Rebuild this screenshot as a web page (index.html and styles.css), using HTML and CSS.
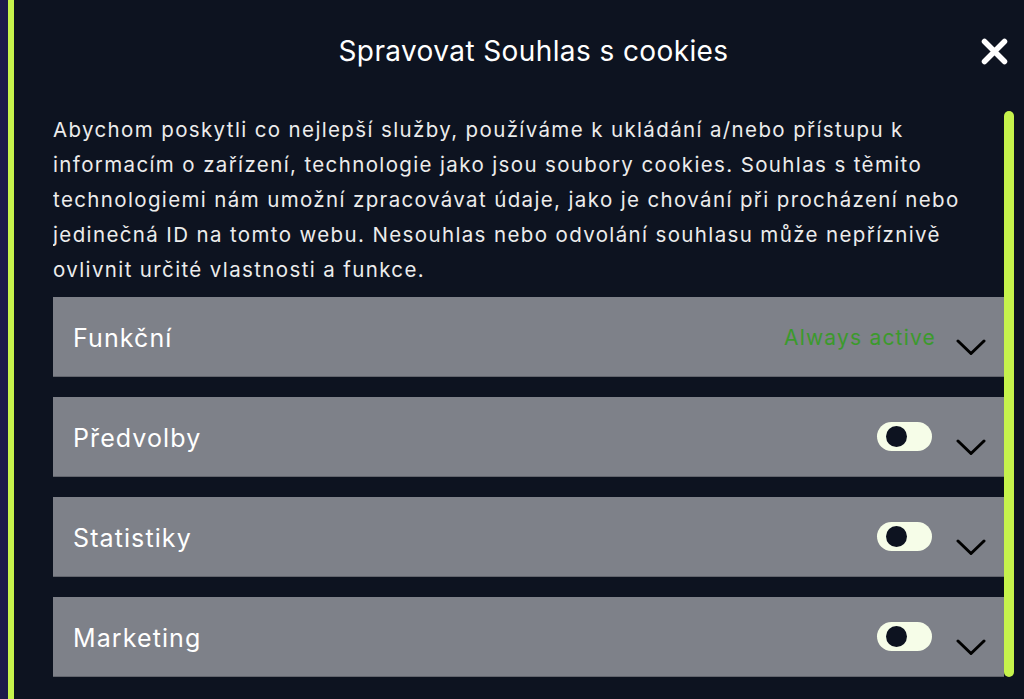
FILE: index.html
```html
<!DOCTYPE html>
<html lang="cs">
<head>
<meta charset="utf-8">
<title>Spravovat Souhlas s cookies</title>
<link rel="stylesheet" href="styles.css">
</head>
<body>
<div class="frame">
  <div class="edge"></div>
  <div class="accent"></div>
  <div class="dialog">
    <div class="header">
      <span></span>
      <h2 class="title">Spravovat Souhlas s cookies</h2>
      <button class="close" aria-label="Zavřít">
        <svg width="27" height="27" viewBox="0 0 27 27"><path d="M3.5 3.5 L23.5 23.5 M23.5 3.5 L3.5 23.5" stroke="#fff" stroke-width="5.5" stroke-linecap="round" fill="none"/></svg>
      </button>
    </div>
    <div class="main">
      <div class="scroll">
        <p class="intro">Abychom poskytli co nejlepší služby, používáme k ukládání a/nebo přístupu k informacím o zařízení, technologie jako jsou soubory cookies. Souhlas s těmito technologiemi nám umožní zpracovávat údaje, jako je chování při procházení nebo jedinečná ID na tomto webu. Nesouhlas nebo odvolání souhlasu může nepříznivě ovlivnit určité vlastnosti a funkce.</p>

        <div class="category">
          <span class="cat-title">Funkční</span>
          <span class="always">Always active</span>
          <svg class="chevron" width="30" height="17" viewBox="0 0 30 17"><path d="M2 2 L15 14.5 L28 2" stroke="#000" stroke-width="3" stroke-linecap="round" stroke-linejoin="round" fill="none"/></svg>
        </div>
        <div class="category">
          <span class="cat-title">Předvolby</span>
          <span class="toggle"><span class="knob"></span></span>
          <svg class="chevron" width="30" height="17" viewBox="0 0 30 17"><path d="M2 2 L15 14.5 L28 2" stroke="#000" stroke-width="3" stroke-linecap="round" stroke-linejoin="round" fill="none"/></svg>
        </div>
        <div class="category">
          <span class="cat-title">Statistiky</span>
          <span class="toggle"><span class="knob"></span></span>
          <svg class="chevron" width="30" height="17" viewBox="0 0 30 17"><path d="M2 2 L15 14.5 L28 2" stroke="#000" stroke-width="3" stroke-linecap="round" stroke-linejoin="round" fill="none"/></svg>
        </div>
        <div class="category">
          <span class="cat-title">Marketing</span>
          <span class="toggle"><span class="knob"></span></span>
          <svg class="chevron" width="30" height="17" viewBox="0 0 30 17"><path d="M2 2 L15 14.5 L28 2" stroke="#000" stroke-width="3" stroke-linecap="round" stroke-linejoin="round" fill="none"/></svg>
        </div>
      </div>
      <div class="thumb"></div>
    </div>
  </div>
</div>
</body>
</html>
```
FILE: styles.css
```css
/* Cookie consent dialog */

body
{ margin: 0;
background-color: #0d1320;
font-family: Inter, "Noto Sans", sans-serif;
color: #f2f2f2;
overflow: hidden;
}

div.frame
{ display: flex;
height: 699px;
}

div.edge
{ width: 8px;
background-color: #1c1a4a;
}

div.accent
{ width: 6px;
background-color: #c6f34c;
}

div.dialog
{ flex: 1;
display: flex;
flex-direction: column;
padding-left: 39px;
padding-right: 10px;
min-width: 0;
}

div.header
{ height: 105px;
display: grid;
grid-template-columns: 1fr auto 1fr;
align-items: center;
}

h2.title
{ margin: 0;
font-size: 28px;
font-weight: 400;
letter-spacing: 0.4px;
color: #ffffff;
padding-bottom: 4px;
}

button.close
{ justify-self: end;
margin-right: 6px;
padding: 0;
border: 0;
background: none;
display: flex;
margin-bottom: 3px;
}

div.main
{ flex: 1;
display: flex;
min-height: 0;
}

div.scroll
{ flex: 1;
overflow: hidden;
padding-top: 7px;
}

p.intro
{ margin: 0 0 10px 0;
font-size: 20.5px;
line-height: 35px;
letter-spacing: 1.37px;
color: #ececec;
}

div.category
{ height: 80px;
box-sizing: border-box;
background-color: #7e8189;
border-bottom: 1px solid #62656d;
margin-bottom: 20px;
display: flex;
align-items: center;
padding-left: 20px;
padding-right: 18px;
}

span.cat-title
{ flex: 1;
font-size: 25px;
letter-spacing: 1.1px;
color: #ffffff;
padding-top: 2px;
}

span.always
{ font-size: 21px;
letter-spacing: 1.2px;
color: #3b9a2c;
margin-right: 20px;
padding-top: 2px;
}

span.toggle
{ width: 55px;
height: 29px;
border-radius: 15px;
background-color: #f6fde8;
display: flex;
align-items: center;
margin-right: 24px;
}

span.knob
{ width: 21px;
height: 21px;
border-radius: 50%;
background-color: #0d1320;
margin-left: 9px;
}

svg.chevron
{ margin-top: 21px;
}

div.thumb
{ width: 10px;
height: 566px;
margin-top: 6px;
border-radius: 5px;
background-color: #c6f34c;
}
```
